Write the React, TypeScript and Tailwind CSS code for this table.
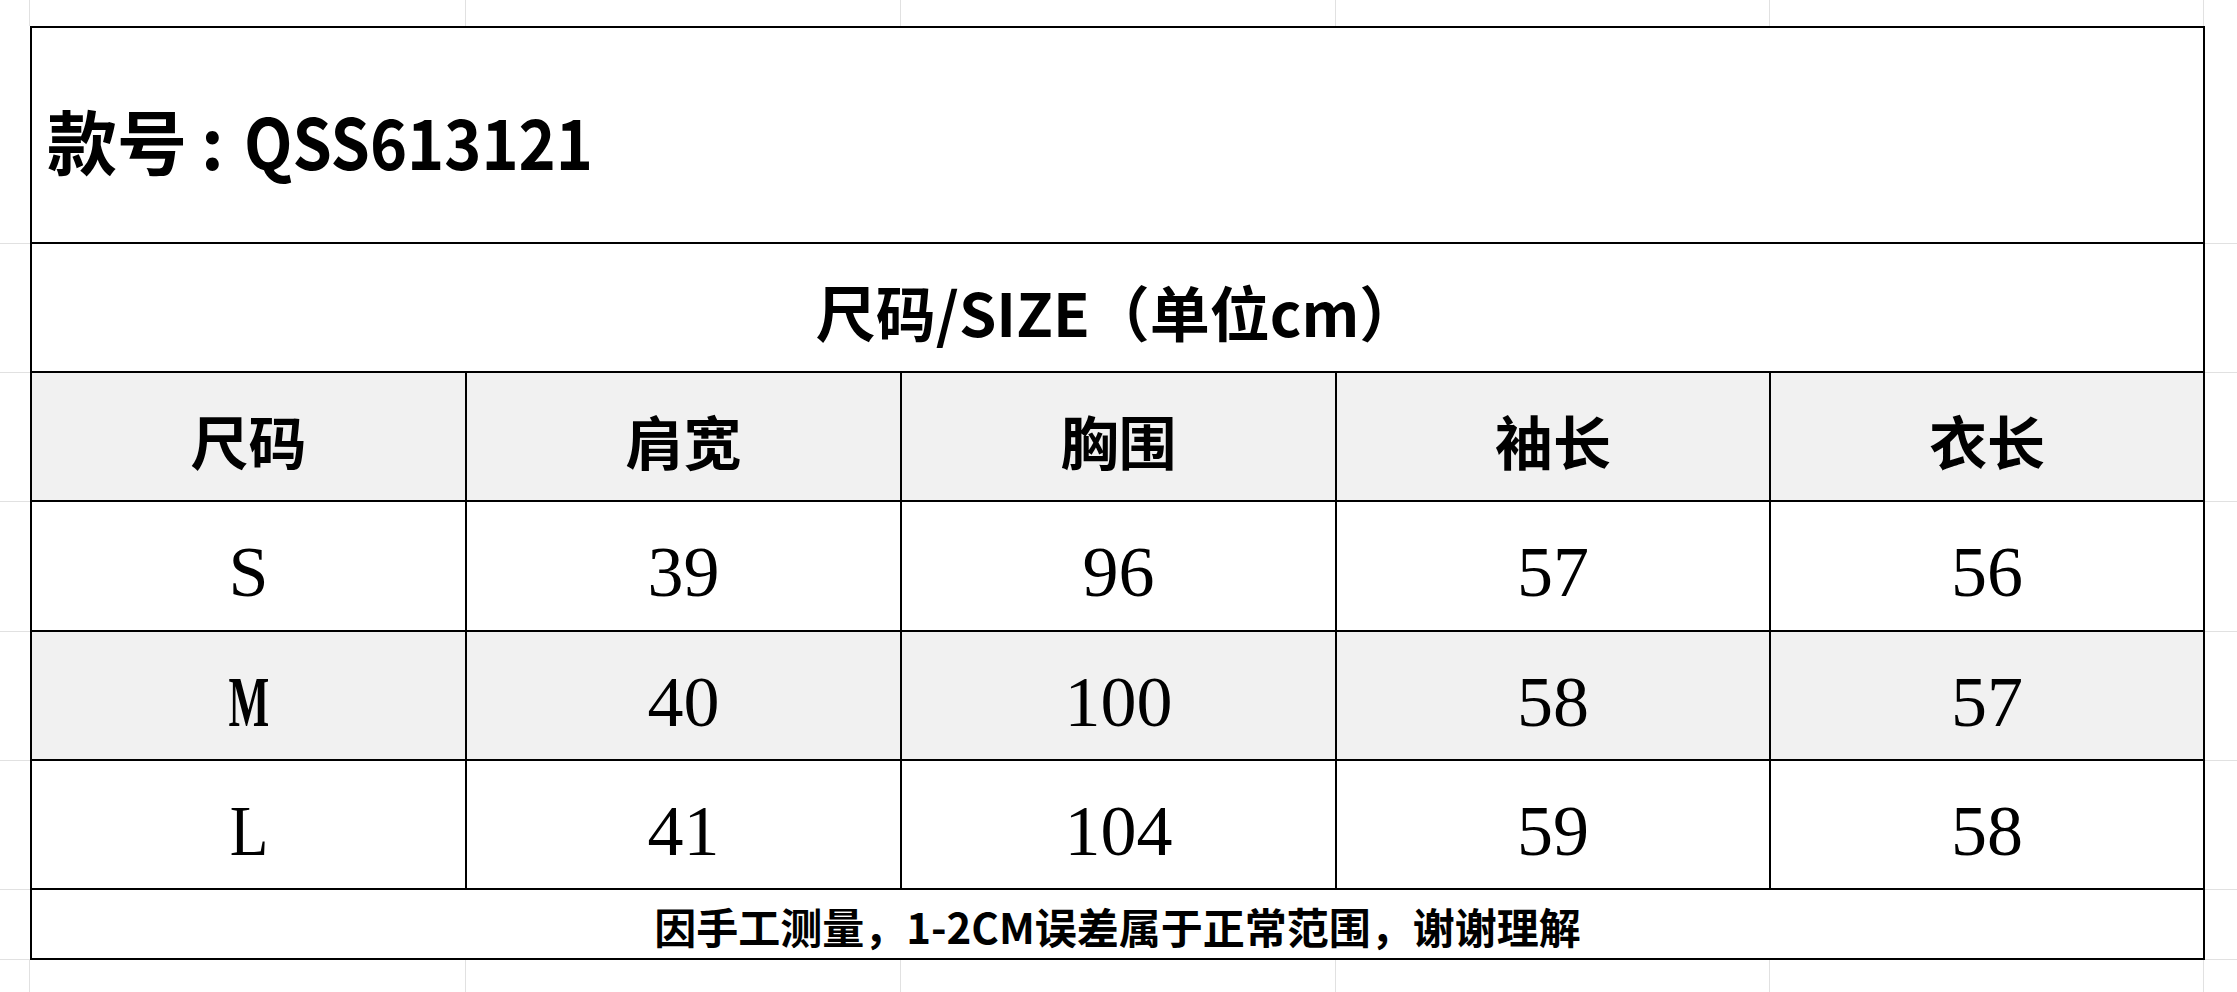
import React from "react";

const grid = "border-[#e1e1e1]";
const ink = "border-black";

const cjk = { fontFamily: '"Noto Sans CJK SC", "Noto Sans", sans-serif' };
const serif = { fontFamily: '"Liberation Serif", "Noto Sans CJK SC", serif' };

const headers = ["尺码", "肩宽", "胸围", "袖长", "衣长"];
const rows = [
    { size: "S", values: ["39", "96", "57", "56"], shaded: false, h: "h-[130px]" },
    { size: "M", values: ["40", "100", "58", "57"], shaded: true, h: "h-[129px]" },
    { size: "L", values: ["41", "104", "59", "58"], shaded: false, h: "h-[129px]" },
];

function MarginLeft({ h }: { h: string }) {
    return <div className={`${h} w-[30px] shrink-0 border-b ${grid}`} />;
}
function MarginRight({ h }: { h: string }) {
    return <div className={`${h} flex-1 border-b ${grid}`} />;
}

const colW = ["w-[437px] border-l-2", "w-[435px]", "w-[435px]", "w-[434px]", "w-[434px]"];

// the size letters in the source are set narrow; M especially
const letterFit: Record<string, string> = {
    S: "",
    M: "inline-block scale-x-[0.6] font-bold",
    L: "inline-block scale-x-[0.88]",
};

export default function App() {
    return (
        <div className="w-[2237px] h-[992px] bg-white overflow-hidden flex flex-col text-black">
            {/* spreadsheet strip above the table */}
            <div className="h-[26px] flex shrink-0">
                <div className={`w-[30px] border-r ${grid}`} />
                <div className={`w-[436px] border-r ${grid}`} />
                <div className={`w-[435px] border-r ${grid}`} />
                <div className={`w-[435px] border-r ${grid}`} />
                <div className={`w-[434px] border-r ${grid}`} />
                <div className={`w-[434px] border-r ${grid}`} />
                <div className="flex-1" />
            </div>

            {/* title row */}
            <div className="flex">
                <MarginLeft h="h-[218px]" />
                <div
                    className={`w-[2175px] h-[218px] border-2 ${ink} flex items-center pl-[15px] pt-[10px]`}
                    style={cjk}
                >
                    <span className="text-[70px] font-bold leading-none">款号</span>
                    <span className="text-[70px] font-bold leading-none ml-[14px] mr-[20px]">:</span>
                    <span className="text-[70px] font-bold leading-none inline-block origin-left scale-x-[0.9]">
                        QSS613121
                    </span>
                </div>
                <MarginRight h="h-[218px]" />
            </div>

            {/* size caption row */}
            <div className="flex">
                <MarginLeft h="h-[129px]" />
                <div
                    className={`w-[2175px] h-[129px] border-x-2 border-b-2 ${ink} flex items-center justify-center pt-[6px]`}
                    style={cjk}
                >
                    <span className="text-[60px] font-bold leading-none">尺码/SIZE（单位cm）</span>
                </div>
                <MarginRight h="h-[129px]" />
            </div>

            {/* header row */}
            <div className="flex">
                <MarginLeft h="h-[129px]" />
                {headers.map((t, i) => (
                    <div
                        key={t}
                        className={`${colW[i]} h-[129px] border-r-2 border-b-2 ${ink} bg-[#f1f1f1] flex items-center justify-center pt-[6px]`}
                        style={cjk}
                    >
                        <span className="text-[58px] font-bold leading-none">{t}</span>
                    </div>
                ))}
                <MarginRight h="h-[129px]" />
            </div>

            {/* data rows */}
            {rows.map((r) => (
                <div key={r.size} className="flex">
                    <MarginLeft h={r.h} />
                    {[r.size, ...r.values].map((v, i) => (
                        <div
                            key={i}
                            className={`${colW[i]} ${r.h} border-r-2 border-b-2 ${ink} ${
                                r.shaded ? "bg-[#f1f1f1]" : "bg-white"
                            } flex items-center justify-center pt-[12px]`}
                            style={serif}
                        >
                            <span className={`text-[72px] leading-none ${i === 0 ? letterFit[v] : ""}`}>
                                {v}
                            </span>
                        </div>
                    ))}
                    <MarginRight h={r.h} />
                </div>
            ))}

            {/* footer note */}
            <div className="flex">
                <MarginLeft h="h-[70px]" />
                <div
                    className={`w-[2175px] h-[70px] border-x-2 border-b-2 ${ink} flex items-center justify-center pt-[4px]`}
                    style={cjk}
                >
                    <span className="text-[42px] font-bold leading-none">
                        因手工测量，1-2CM误差属于正常范围，谢谢理解
                    </span>
                </div>
                <MarginRight h="h-[70px]" />
            </div>

            {/* spreadsheet strip below the table */}
            <div className="flex-1 flex">
                <div className={`w-[30px] border-r ${grid}`} />
                <div className={`w-[436px] border-r ${grid}`} />
                <div className={`w-[435px] border-r ${grid}`} />
                <div className={`w-[435px] border-r ${grid}`} />
                <div className={`w-[434px] border-r ${grid}`} />
                <div className={`w-[434px] border-r ${grid}`} />
                <div className="flex-1" />
            </div>
        </div>
    );
}
